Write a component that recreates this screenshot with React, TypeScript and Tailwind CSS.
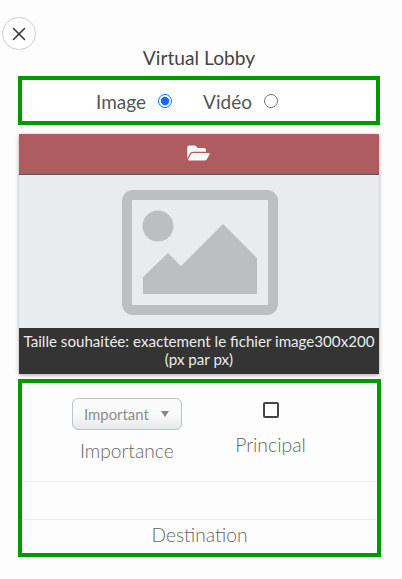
import React from 'react';
import { FaFolderOpen } from 'react-icons/fa';
import { X } from 'lucide-react';

export default function App() {
  return (
    <div className="w-[402px] h-[579px] overflow-hidden bg-[#fdfdfd] font-['Lato',sans-serif] text-[#444] [will-change:opacity]">
      <div className="pt-[17px] pl-[2px]">
        <button className="w-[34px] h-[33px] rounded-full border border-[#ccc] bg-white flex items-center justify-center text-[#333]">
          <X className="w-[22px] h-[22px]" strokeWidth={1.6} />
        </button>
      </div>

      <h1 className="text-center text-[19.2px] leading-[22px] font-normal text-[#444] -mt-[3px] ml-[-4px]">Virtual Lobby</h1>

      {/* Type */}
      <div className="mt-[7px] ml-[18px] w-[362px] h-[49px] border-[4px] border-[#009a00] bg-white flex items-center justify-center pr-[24px] pt-[4px] text-[19px] text-[#555]">
        <label className="flex items-center">
          Image
          <input type="radio" name="kind" defaultChecked className="ml-[12px] w-[14px] h-[14px] accent-[#0a6cff] mb-[4px]" />
        </label>
        <label className="flex items-center ml-[31px]">
          Vidéo
          <input type="radio" name="kind" className="ml-[12px] w-[14px] h-[14px] mb-[4px]" />
        </label>
      </div>

      {/* Image picker */}
      <div className="mt-[9px] ml-[19px] w-[360px] h-[240px] flex flex-col shadow-[0_1px_4px_rgba(0,0,0,0.35)]">
        <div className="h-[41px] bg-[#ae5c5f] border-b border-[#555] flex items-center justify-center text-[#f8f8f8]">
          <FaFolderOpen className="w-[23px] h-[20px] mr-[2px] mb-[2px]" />
        </div>
        <div className="flex-1 bg-[#e9ecef] flex items-center justify-center">
          <svg width="156" height="126" viewBox="0 0 156 126" className="mt-[3px] ml-[1px]">
            <rect x="5" y="5" width="146" height="115" rx="6" fill="none" stroke="#bcbfc1" strokeWidth="10" />
            <circle cx="36" cy="36" r="15.5" fill="#bcbfc1" />
            <path d="M21 87 L46 63 L59 76 L101 34 L135 68 L135 104 L21 104 Z" fill="#bcbfc1" />
          </svg>
        </div>
        <div className="h-[46px] bg-[#343434] text-[#ececec] text-[15.13px] leading-[18px] text-center pt-[4px] whitespace-nowrap">
          Taille souhaitée: exactement le fichier image300x200
          <br />
          (px par px)
        </div>
      </div>

      {/* Options */}
      <div className="mt-[5px] ml-[18px] w-[363px] h-[178px] border-[4px] border-[#009a00] bg-[#fdfdfd] flex flex-col">
        <div className="h-[99px] border-b border-[#eee] flex">
          <div className="w-[212px] pl-[50px] pt-[15px] flex flex-col">
            <div className="w-[110px] h-[32px] rounded-[6px] border border-[#b8c4cc] bg-gradient-to-b from-[#fafafa] from-50% to-[#e8e8e8] flex items-center pl-[11px] text-[14.9px] text-[#8c8c8c]">
              Important
              <span className="ml-[12px] w-0 h-0 border-x-[4px] border-x-transparent border-t-[6px] border-t-[#888]" />
            </div>
            <span className="mt-[9px] ml-[8px] text-[19.2px] leading-[24px] font-light text-[#666]">Importance</span>
          </div>
          <div className="w-[73px] flex flex-col items-center pt-[19px]">
            <input type="checkbox" className="appearance-none w-[16px] h-[16px] border-[2px] border-[#444] rounded-[2px] bg-white" />
            <span className="mt-[15px] text-[19.4px] leading-[24px] font-light text-[#666] whitespace-nowrap">Principal</span>
          </div>
        </div>
        <div className="h-[38px] border-b border-[#eee]" />
        <div className="flex-1 text-center text-[19.2px] leading-[30px] font-light text-[#666]">Destination</div>
      </div>
    </div>
  );
}
